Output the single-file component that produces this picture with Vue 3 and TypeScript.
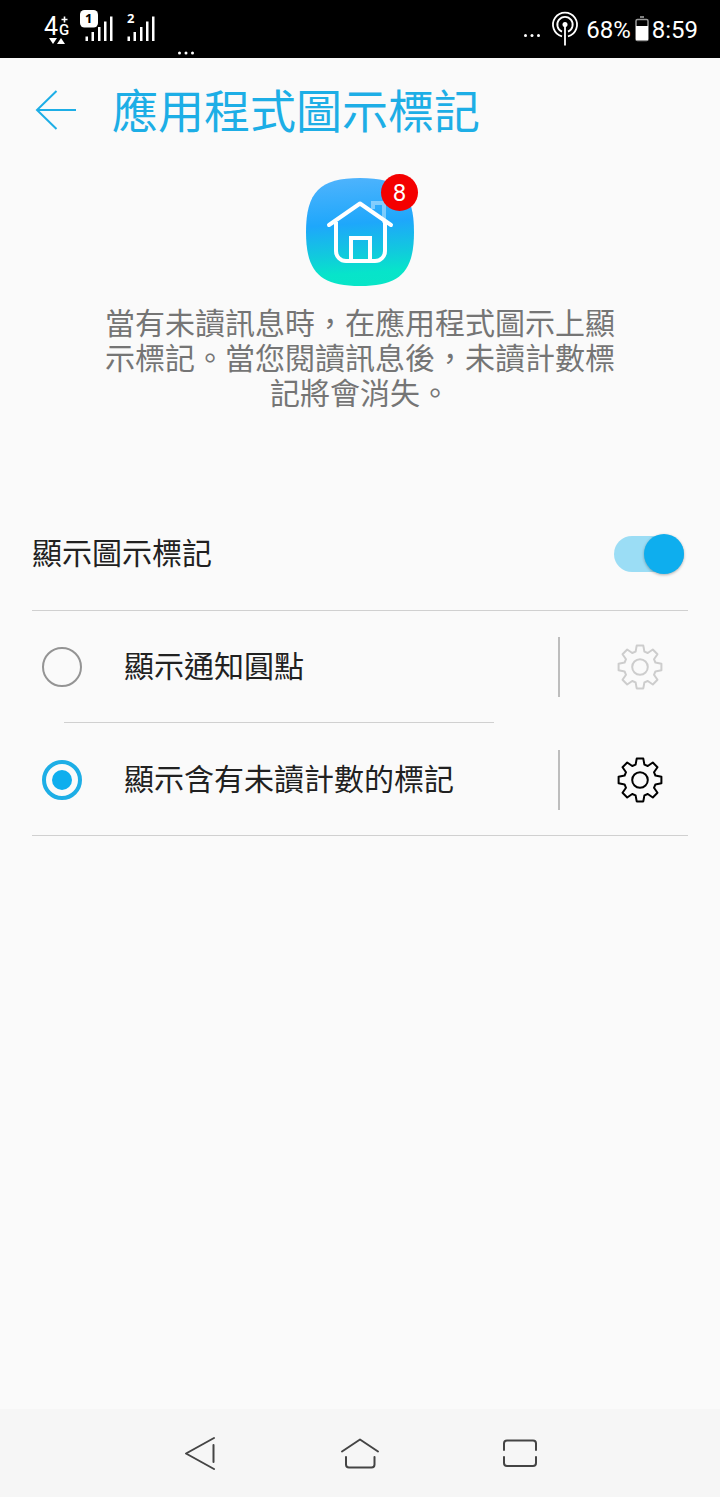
<script setup lang="ts">
import { ref } from 'vue'

type BadgeStyle = 'dot' | 'count'

interface Option {
  value: BadgeStyle
  label: string
}

const options: Option[] = [
  { value: 'dot', label: '顯示通知圓點' },
  { value: 'count', label: '顯示含有未讀計數的標記' },
]

const enabled = ref(true)
const selected = ref<BadgeStyle>('count')

// Eight-toothed gear outline centred on the origin.
function gearOutline(): string {
  const tooth = [[-4.4, -15.4], [-3.3, -21.4], [3.3, -21.4], [4.4, -15.4]]
  const points: string[] = []
  for (let i = 0; i < 8; i++) {
    const a = (i * Math.PI) / 4
    for (const [x, y] of tooth) {
      const px = x * Math.cos(a) - y * Math.sin(a)
      const py = x * Math.sin(a) + y * Math.cos(a)
      points.push(`${px.toFixed(2)} ${py.toFixed(2)}`)
    }
  }
  return `M${points.join('L')}Z`
}

const gear = gearOutline()
</script>

<template>
  <div class="screen">
    <header class="status">
      <svg class="status-left" width="160" height="58" viewBox="40 0 160 58" aria-hidden="true">
        <g fill="#fff">
          <text x="44" y="35" font-size="25">4</text>
          <text x="59" y="35" font-size="15" class="medium">G</text>
          <path d="M61.500 19.500h6M64.500 16.500v6" stroke="#fff" stroke-width="1.600" />
          <path d="M49 38h8l-4 6zM57 44h8l-4-6z" />
          <rect x="80" y="10" width="18" height="17.500" rx="4.500" />
          <path d="M85.500 36.500h2.500v4.500h-2.500zM91.500 32h2.500v9h-2.500zM98 27h2.500v14h-2.500zM104 21.500h2.500v19.500h-2.500zM110 16.500h2.500v24.500h-2.500z" />
          <path d="M127.500 36.500h2.500v4.500h-2.500zM133.500 32h2.500v9h-2.500zM140 27h2.500v14h-2.500zM146 21.500h2.500v19.500h-2.500zM152 16.500h2.500v24.500h-2.500z" />
          <text x="127" y="23" font-size="13" class="small">2</text>
          <circle cx="179.500" cy="53" r="1.500" />
          <circle cx="186" cy="53" r="1.500" />
          <circle cx="192.500" cy="53" r="1.500" />
        </g>
        <text x="85" y="23" font-size="13" class="small" fill="#000">1</text>
      </svg>
      <div class="status-right">
        <svg width="60" height="58" viewBox="520 0 60 58" aria-hidden="true">
          <g fill="#fff">
            <circle cx="525.500" cy="35.500" r="1.500" />
            <circle cx="532" cy="35.500" r="1.500" />
            <circle cx="538.500" cy="35.500" r="1.500" />
            <circle cx="565" cy="24.500" r="2.500" />
          </g>
          <g fill="none" stroke="#fff" stroke-width="1.800">
            <path d="M565 24.500v21M562 31.700a7.700 7.700 0 1 1 6 0M562 36.300a12 12 0 1 1 6 0" />
          </g>
        </svg>
        <span class="percent">68%</span>
        <svg class="battery" width="14" height="58" viewBox="635 0 14 58" aria-hidden="true">
          <path d="M640 17h4" stroke="#aaa" stroke-width="1.500" />
          <rect x="636" y="19.500" width="12" height="21" rx="1.500" fill="none" stroke="#999" stroke-width="1.500" />
          <rect x="636" y="26" width="12" height="14" fill="#fff" />
        </svg>
        <time>8:59</time>
      </div>
    </header>

    <main>
      <div class="title-bar">
        <button class="back" type="button" aria-label="返回">
          <svg width="44" height="44" viewBox="0 0 44 44" fill="none" stroke="#1daee6" stroke-width="2">
            <path d="M42 22H3M22.500 3L3 22l19.500 19" />
          </svg>
        </button>
        <h1>應用程式圖示標記</h1>
      </div>

      <section class="intro">
        <div class="app-icon">
          <svg width="108" height="108" viewBox="0 0 108 108" fill="none" aria-hidden="true">
            <defs>
              <linearGradient id="tile" x1="0.450" y1="0" x2="0.520" y2="1">
                <stop offset="0" stop-color="#4db3fd" />
                <stop offset="0.420" stop-color="#1ea7fb" />
                <stop offset="0.700" stop-color="#11cadd" />
                <stop offset="0.880" stop-color="#07e4ca" />
                <stop offset="1" stop-color="#08e5c7" />
              </linearGradient>
            </defs>
            <path d="M54 0C94 0 108 14 108 54S94 108 54 108 0 94 0 54 14 0 54 0Z" fill="url(#tile)" />
            <path d="M67 31V25h11v20" stroke="#fff" stroke-opacity="0.400" stroke-width="4" />
            <path d="M30 44v29a10 10 0 0 0 10 10h29a10 10 0 0 0 10-10V44M45 83V60h19v23" stroke="#fff" stroke-width="4" />
            <path d="M23 47L54 25.500 85 47" stroke="#fff" stroke-width="4" stroke-linecap="round" stroke-linejoin="round" />
          </svg>
          <span class="badge">8</span>
        </div>
        <p>當有未讀訊息時，在應用程式圖示上顯示標記。當您閱讀訊息後，未讀計數標記將會消失。</p>
      </section>

      <label class="switch-row">
        <span>顯示圖示標記</span>
        <input v-model="enabled" class="switch" type="checkbox" role="switch" />
      </label>

      <div class="options" role="radiogroup" aria-label="顯示圖示標記">
        <div v-for="option in options" :key="option.value" class="option">
          <label>
            <input v-model="selected" type="radio" name="badge-style" :value="option.value" :disabled="!enabled" />
            <span>{{ option.label }}</span>
          </label>
          <button
            class="gear"
            type="button"
            :disabled="!enabled || selected !== option.value"
            :aria-label="`${option.label} 設定`"
          >
            <svg width="48" height="48" viewBox="-24 -24 48 48" fill="none" stroke="currentColor" stroke-width="2" stroke-linejoin="round">
              <path :d="gear" />
              <circle r="7.800" />
            </svg>
          </button>
        </div>
      </div>
    </main>

    <nav class="nav">
      <button type="button" aria-label="上一頁">
        <svg width="40" height="40" viewBox="0 0 40 40"><path d="M34 5L6 20.500 34 36M33.500 12v17" /></svg>
      </button>
      <button type="button" aria-label="主畫面">
        <svg width="40" height="40" viewBox="0 0 40 40"><path d="M2 18.500L20 6.500l18 12M6 24v7.500a3 3 0 0 0 3 3h22.500a3 3 0 0 0 3-3V24" /></svg>
      </button>
      <button type="button" aria-label="最近使用">
        <svg width="40" height="40" viewBox="0 0 40 40"><path d="M4 17v-6.500a3 3 0 0 1 3-3h26a3 3 0 0 1 3 3V17M4 24v6a3 3 0 0 0 3 3h26a3 3 0 0 0 3-3v-6" /></svg>
      </button>
    </nav>
  </div>
</template>

<style>
body {
  margin: 0;
  background: #fafafa;
}
</style>

<style scoped>
.screen {
  display: flex;
  flex-direction: column;
  min-height: 100vh;
  background: #fafafa;
  color: #212121;
  font-family: Roboto, "Noto Sans CJK TC", sans-serif;
  font-size: 30px;
}

button {
  display: flex;
  align-items: center;
  justify-content: center;
  padding: 0;
  border: 0;
  background: none;
  color: inherit;
  font: inherit;
}

.status {
  display: flex;
  justify-content: space-between;
  height: 58px;
  padding: 0 22px 0 40px;
  background: #000;
  color: #fff;
}

.status-left {
  font-family: Roboto, sans-serif;
}

.medium {
  font-weight: 500;
}

.small {
  font-family: "Noto Sans", sans-serif;
  font-weight: 700;
}

.status-right {
  display: flex;
  font-size: 24px;
  line-height: 60px;
}

.percent {
  margin-left: 6px;
}

.battery {
  margin: 0 3px 0 4px;
}

main {
  flex: 1;
}

.title-bar {
  display: flex;
  align-items: center;
  gap: 34px;
  height: 104px;
  padding-left: 34px;
}

h1 {
  margin: 0;
  padding-top: 4px;
  color: #1daee6;
  font-size: 46px;
  font-weight: 400;
  line-height: 60px;
}

.intro {
  display: flex;
  flex-direction: column;
  align-items: center;
  padding: 16px 104px 87px;
}

.app-icon {
  position: relative;
  height: 108px;
}

.badge {
  position: absolute;
  top: -4px;
  right: -4px;
  width: 37px;
  height: 37px;
  border-radius: 50%;
  background: #f40000;
  color: #fff;
  font-size: 24px;
  line-height: 38px;
  text-align: center;
}

.intro p {
  margin: 20px 0 0;
  color: #757575;
  line-height: 35px;
  text-align: center;
}

.switch-row {
  display: flex;
  align-items: center;
  justify-content: space-between;
  height: 112px;
  margin: 0 32px;
  padding-right: 4px;
  border-bottom: 1px solid #d0d0d0;
}

.switch-row span,
.option span {
  line-height: 40px;
}

.switch {
  appearance: none;
  display: flex;
  align-items: center;
  width: 70px;
  height: 36px;
  margin: 0;
  border-radius: 18px;
  background: #cfcfcf;
}

.switch::before {
  content: "";
  width: 40px;
  height: 40px;
  flex: none;
  border-radius: 50%;
  background: #fff;
  box-shadow: 0 1px 3px rgba(0, 0, 0, 0.3);
}

.switch:checked {
  justify-content: flex-end;
  background: #9bddf5;
}

.switch:checked::before {
  background: #0eaeee;
}

.options {
  display: flex;
  flex-direction: column;
}

.option {
  position: relative;
  display: flex;
  align-items: center;
  height: 112px;
}

.option:last-child {
  height: 113px;
}

.option::after {
  content: "";
  position: absolute;
  right: 32px;
  bottom: 0;
  left: 32px;
  height: 1px;
  background: #d0d0d0;
}

.option:not(:last-child)::after {
  right: 226px;
  left: 64px;
}

.option label {
  display: flex;
  flex: 1;
  align-items: center;
  gap: 42px;
  padding-left: 42px;
}

.option input {
  appearance: none;
  box-sizing: border-box;
  display: grid;
  place-content: center;
  width: 40px;
  height: 40px;
  margin: 0;
  border: 2px solid #949494;
  border-radius: 50%;
}

.option input:checked {
  border: 4px solid #1daee6;
}

.option input:checked::before {
  content: "";
  width: 20px;
  height: 20px;
  border-radius: 50%;
  background: #0eaeee;
}

.gear {
  width: 162px;
  height: 60px;
  border-left: 2px solid #bdbdbd;
  color: #000;
}

.gear:disabled {
  color: #cdcdcd;
}

.nav {
  display: flex;
  justify-content: center;
  gap: 120px;
  height: 88px;
  background: #f6f6f6;
}

.nav svg {
  fill: none;
  stroke: #444;
  stroke-width: 2;
  stroke-linecap: round;
  stroke-linejoin: round;
}
</style>
